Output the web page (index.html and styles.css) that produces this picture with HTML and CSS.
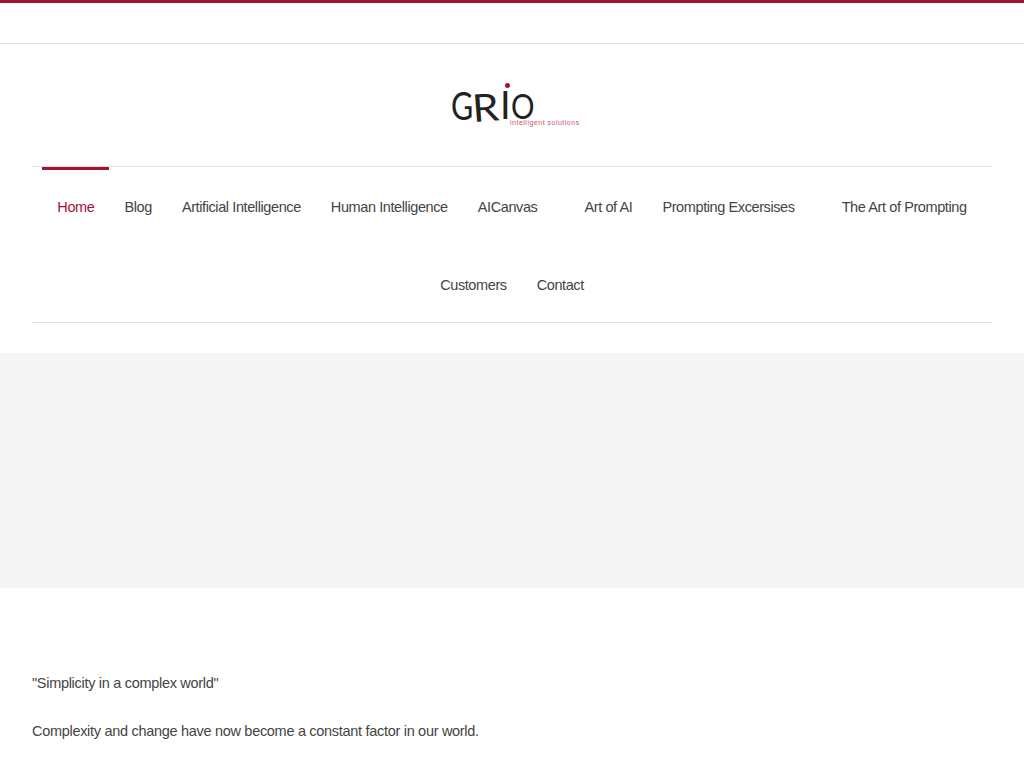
FILE: index.html
```html
<!DOCTYPE html>
<html lang="en">
<head>
    <meta charset="UTF-8">
    <meta name="viewport" content="width=device-width, initial-scale=1.0">
    <title>Grio</title>
    <link rel="stylesheet" href="styles.css">
</head>
<body>
    <div class="topbar"></div>

    <header class="header">
        <a class="logo" href="#">
            <span class="logo-letter letter-g">G</span>
            <span class="logo-letter letter-r">R</span>
            <span class="logo-letter letter-i">I</span>
            <span class="logo-dot"></span>
            <span class="logo-letter letter-o">O</span>
            <span class="logo-tag">intelligent solutions</span>
        </a>

        <nav class="nav">
            <a class="nav-item active" href="#">Home</a>
            <a class="nav-item" href="#">Blog</a>
            <a class="nav-item" href="#">Artificial Intelligence</a>
            <a class="nav-item" href="#">Human Intelligence</a>
            <a class="nav-item has-sub" href="#">AICanvas</a>
            <a class="nav-item" href="#">Art of AI</a>
            <a class="nav-item has-sub" href="#">Prompting Excersises</a>
            <a class="nav-item" href="#">The Art of Prompting</a>
            <a class="nav-item" href="#">Customers</a>
            <a class="nav-item" href="#">Contact</a>
        </nav>
    </header>

    <div class="banner"></div>

    <main class="content">
        <p>"Simplicity in a complex world"</p>
        <p>Complexity and change have now become a constant factor in our world.</p>
    </main>
</body>
</html>
```

FILE: styles.css
```css
body {
    margin: 0;
    font-family: "Liberation Sans", Arial, sans-serif;
    font-size: 14.5px;
    letter-spacing: -0.3px;
    color: #444;
    background-color: #fff;
    overflow: hidden;
}
a {
    color: inherit;
    text-decoration: none;
}

.topbar {
    height: 40px;
    border-top: 3px solid #a31235;
    border-bottom: 1px solid #e2e2e2;
}

.header {
    margin: 0 32px;
    padding-top: 38px;
}

/* Logo, letters placed one by one because it is a hand drawn wordmark */
.logo {
    display: block;
    position: relative;
    left: 4px;
    width: 128px;
    height: 47px;
    margin: 0 auto;
    color: #222;
    letter-spacing: 0;
}
.logo-letter {
    position: absolute;
    font-family: "Lato", sans-serif;
    font-size: 38px;
    line-height: 20px;
    transform-origin: left center;
}
.letter-g {
    left: -1px;
    top: 13px;
    transform: scaleX(0.8);
}
.letter-r {
    left: 20px;
    top: 15px;
    transform: scaleX(1.12) rotate(-4deg);
}
.letter-i {
    left: 48px;
    top: 12px;
}
.letter-o {
    left: 59px;
    top: 13px;
    font-size: 35px;
    transform: scaleX(0.84);
}
.logo-dot {
    position: absolute;
    left: 53px;
    top: 1px;
    width: 5px;
    height: 5px;
    border-radius: 50%;
    background-color: #a31235;
}
.logo-tag {
    position: absolute;
    left: 58px;
    top: 37px;
    font-size: 7px;
    line-height: 7px;
    letter-spacing: 0.5px;
    white-space: nowrap;
    color: #c9566f;
}

/* Menu */
.nav {
    display: flex;
    flex-wrap: wrap;
    justify-content: center;
    align-content: flex-start;
    height: 155px;
    margin-top: 37px;
    border-top: 1px solid #e2e2e2;
    border-bottom: 1px solid #e2e2e2;
}
.nav-item {
    position: relative;
    padding: 2px 15px 0;
    line-height: 76px;
    letter-spacing: -0.4px;
    white-space: nowrap;
}
.nav-item.has-sub {
    padding-right: 32px;
}
.nav-item.active {
    color: #a31235;
}
.nav-item.active::before {
    content: "";
    position: absolute;
    top: 0;
    left: 0;
    right: 0;
    height: 3px;
    background-color: #a31235;
}

.banner {
    height: 235px;
    margin-top: 30px;
    background-color: #f5f5f5;
}

.content {
    margin: 0 32px;
    padding-top: 71px;
    line-height: 48px;
}
.content p {
    margin: 0;
}
```
